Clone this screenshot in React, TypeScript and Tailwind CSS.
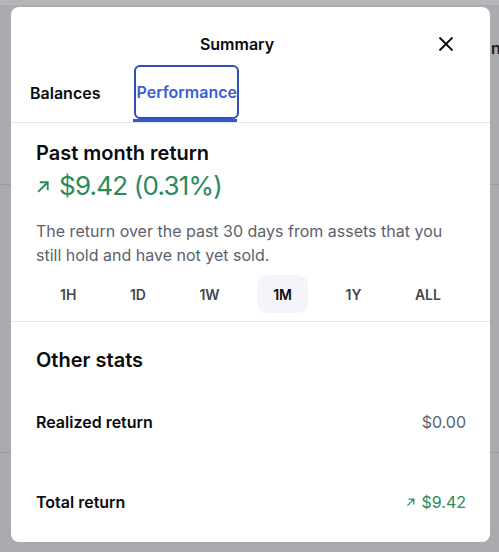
import React from 'react';

const ranges = ['1H', '1D', '1W', '1M', '1Y', 'ALL'];

const UpArrow = ({ size, className }: { size: number; className?: string }) => (
  <svg width={size} height={size} viewBox="0 0 16 16" fill="none" className={className}>
    <path d="M3 13 L12.5 3.5 M5 3.5 H12.5 V11" stroke="currentColor" strokeWidth="2" strokeLinecap="square" />
  </svg>
);

const StatRow = ({ label, children }: { label: string; children: React.ReactNode }) => (
  <div className="h-[80px] flex items-center justify-between pl-[25px] pr-[24px]">
    <span className="text-[16px] font-semibold text-[#0a0b0d]">{label}</span>
    {children}
  </div>
);

export default function App() {
  return (
    <div
      className="relative w-[499px] h-[552px] overflow-hidden bg-[#a9abaf] pt-[7px] pl-[11px]"
      style={{ fontFamily: 'Inter, "Noto Sans", sans-serif' }}
    >
      {/* page behind the overlay */}
      <div className="absolute left-0 top-0 w-full h-[5px] bg-[#b3b5b8]" />
      <div className="absolute left-0 top-[184px] w-full h-[1px] bg-[#9a9ca0]" />
      <div className="absolute left-0 top-[452px] w-full h-[1px] bg-[#9a9ca0]" />
      <span className="absolute left-[491px] top-[36px] text-[16px] font-semibold text-[#1c1d20]">n</span>

      <div className="relative w-[479px] h-[535px] bg-white rounded-[8px] overflow-hidden flex flex-col">
        {/* header */}
        <div className="flex items-center pt-[26px] pl-[37px] pr-[24px]">
          <div className="flex-1 text-center text-[16px] leading-[22px] font-semibold text-[#0a0b0d]">Summary</div>
          <button className="w-[40px] h-[22px] flex items-center justify-center text-[#0a0b0d]">
            <svg width="16" height="16" viewBox="0 0 16 16" fill="none">
              <path d="M1.5 1.5 L14.5 14.5 M14.5 1.5 L1.5 14.5" stroke="currentColor" strokeWidth="1.8" />
            </svg>
          </button>
        </div>

        {/* tabs */}
        <div className="flex items-end gap-[36px] pl-[19px] pt-[11px] border-b border-[#e3e5e9]">
          <div className="flex flex-col">
            <div className="h-[52px] flex items-center text-[16px] font-semibold text-[#0a0b0d]">Balances</div>
            <div className="h-[3px]" />
          </div>
          <div className="flex flex-col items-center">
            <div className="h-[50px] mt-[1px] flex items-center text-[16px] font-semibold text-[#3a5ed8] outline-2 outline-[#2f4fb2] rounded-[4px]">
              Performance
            </div>
            <div className="h-[3px] w-[104px] bg-[#3357d4] mt-[2px] -ml-[4px]" />
          </div>
        </div>

        {/* past month */}
        <div className="pt-[16px] border-b border-[#e3e5e9] pb-[8px]">
          <div className="px-[25px]">
            <div className="text-[20px] leading-[28px] font-semibold text-[#0a0b0d]">Past month return</div>
            <div className="flex items-center gap-[8px] text-[#2a8a5a] mt-[3px]">
              <UpArrow size={15} />
              <span className="text-[26px] leading-[32px] tracking-[-0.8px]">$9.42 (0.31%)</span>
            </div>
            <p className="mt-[17px] text-[16px] leading-[24px] text-[#5b616e]">
              The return over the past 30 days from assets that you still hold and have not yet sold.
            </p>
          </div>
          <div className="flex justify-between px-[33px] mt-[8px]">
            {ranges.map((r) => (
              <button
                key={r}
                className={
                  r === '1M'
                    ? 'h-[38px] px-4 rounded-[10px] bg-[#f3f5fa] text-[14px] font-semibold text-[#0a0b0d]'
                    : 'h-[38px] px-4 rounded-[10px] text-[14px] font-semibold text-[#44474d]'
                }
              >
                {r}
              </button>
            ))}
          </div>
        </div>

        {/* other stats */}
        <div className="pt-[24px] pb-[8px] px-[25px]">
          <div className="text-[20px] leading-[28px] font-semibold text-[#0a0b0d]">Other stats</div>
        </div>
        <StatRow label="Realized return">
          <span className="text-[16px] text-[#5b616e]">$0.00</span>
        </StatRow>
        <StatRow label="Total return">
          <span className="flex items-center gap-[6px] text-[16px] text-[#2a8a5a]">
            <UpArrow size={10} />
            $9.42
          </span>
        </StatRow>
      </div>
    </div>
  );
}
